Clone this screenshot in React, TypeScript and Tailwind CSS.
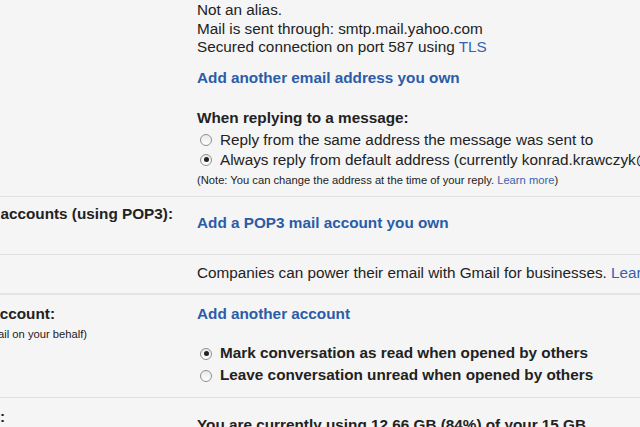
import type { ReactNode } from 'react'

// ─── Small building blocks ────────────────────────────────────────────────────
function Radio({ checked }: { checked?: boolean }) {
  return (
    <span className="flex h-[12px] w-[12px] shrink-0 items-center justify-center rounded-full border border-[#8f8f8f] bg-gradient-to-b from-[#e9e9e9] to-white">
      {checked && <span className="h-[5px] w-[5px] rounded-full bg-[#222]" />}
    </span>
  )
}

function RadioRow({ checked, bold, children }: { checked?: boolean; bold?: boolean; children: ReactNode }) {
  return (
    <label className={`flex items-center gap-[8px] pl-[3px] whitespace-nowrap ${bold ? 'h-[22px] font-bold' : 'h-[20px]'}`}>
      <Radio checked={checked} />
      <span>{children}</span>
    </label>
  )
}

// label cell: right edge pinned, text spills off to the left
function Label({ end, children }: { end: string; children: ReactNode }) {
  return (
    <div className={`flex justify-end whitespace-nowrap ${end}`}>
      {children}
    </div>
  )
}

const link = 'font-bold text-[#2b5ca8]'

// ─── Settings table ───────────────────────────────────────────────────────────
export default function App() {
  return (
    <div
      className="h-[427px] w-[640px] overflow-hidden bg-[#f5f5f5] text-[15.3px] leading-[18.5px] text-[#222]"
      style={{ fontFamily: '"Liberation Sans", Arial, sans-serif' }}
    >
      {/* ── Send mail as ── */}
      <div className="flex h-[197px] border-b border-[#e1e1e1]">
        <div className="w-[197px] shrink-0" />
        <div className="whitespace-nowrap pt-[1px]">
          <div>Not an alias.</div>
          <div>Mail is sent through: smtp.mail.yahoo.com</div>
          <div>
            Secured connection on port 587 using <span className="text-[#3563ae]">TLS</span>
          </div>
          <div className={`mt-[12px] ${link}`}>Add another email address you own</div>
          <div className="mt-[21.5px] font-bold">When replying to a message:</div>
          <div className="mt-[2.75px]">
            <RadioRow>Reply from the same address the message was sent to</RadioRow>
            <RadioRow checked>
              Always reply from default address (currently konrad.krawczyk@yahoo.com)
            </RadioRow>
          </div>
          <div className="mt-[3px] text-[11.2px] leading-[14px]">
            (Note: You can change the address at the time of your reply.{' '}
            <span className="text-[#3563ae]">Learn more</span>)
          </div>
        </div>
      </div>

      {/* ── Check mail from other accounts ── */}
      <div className="flex h-[58px] border-b border-[#e1e1e1]">
        <div className="w-[197px] shrink-0 pt-[7.5px] font-bold">
          <Label end="w-[173px]">Check mail from other accounts (using POP3):</Label>
        </div>
        <div className={`pt-[17px] whitespace-nowrap ${link}`}>Add a POP3 mail account you own</div>
      </div>

      {/* ── Using Gmail for work ── */}
      <div className="flex h-[40px] border-b-2 border-[#e4e4e4]">
        <div className="w-[197px] shrink-0" />
        <div className="pt-[9px] whitespace-nowrap">
          Companies can power their email with Gmail for businesses.{' '}
          <span className="text-[#3563ae]">Learn more</span>
        </div>
      </div>

      {/* ── Grant access to your account ── */}
      <div className="flex h-[103px] border-b border-[#e1e1e1]">
        <div className="w-[197px] shrink-0 pt-[9.5px]">
          <Label end="w-[55px]">
            <span className="font-bold">Grant access to your account:</span>
          </Label>
          <div className="mt-[4px] text-[11.2px] leading-[14px]">
            <Label end="w-[87px]">(Allow others to read and send mail on your behalf)</Label>
          </div>
        </div>
        <div className="pt-[9.5px] whitespace-nowrap">
          <div className={link}>Add another account</div>
          <div className="mt-[19.5px]">
            <RadioRow checked bold>Mark conversation as read when opened by others</RadioRow>
            <RadioRow bold>Leave conversation unread when opened by others</RadioRow>
          </div>
        </div>
      </div>

      {/* ── Account storage ── */}
      <div className="flex">
        <div className="w-[197px] shrink-0 pt-[10px] font-bold">
          <Label end="w-[5px]">Add additional storage:</Label>
        </div>
        <div className="pt-[17.5px] whitespace-nowrap font-bold">
          You are currently using 12.66 GB (84%) of your 15 GB.
        </div>
      </div>
    </div>
  )
}
